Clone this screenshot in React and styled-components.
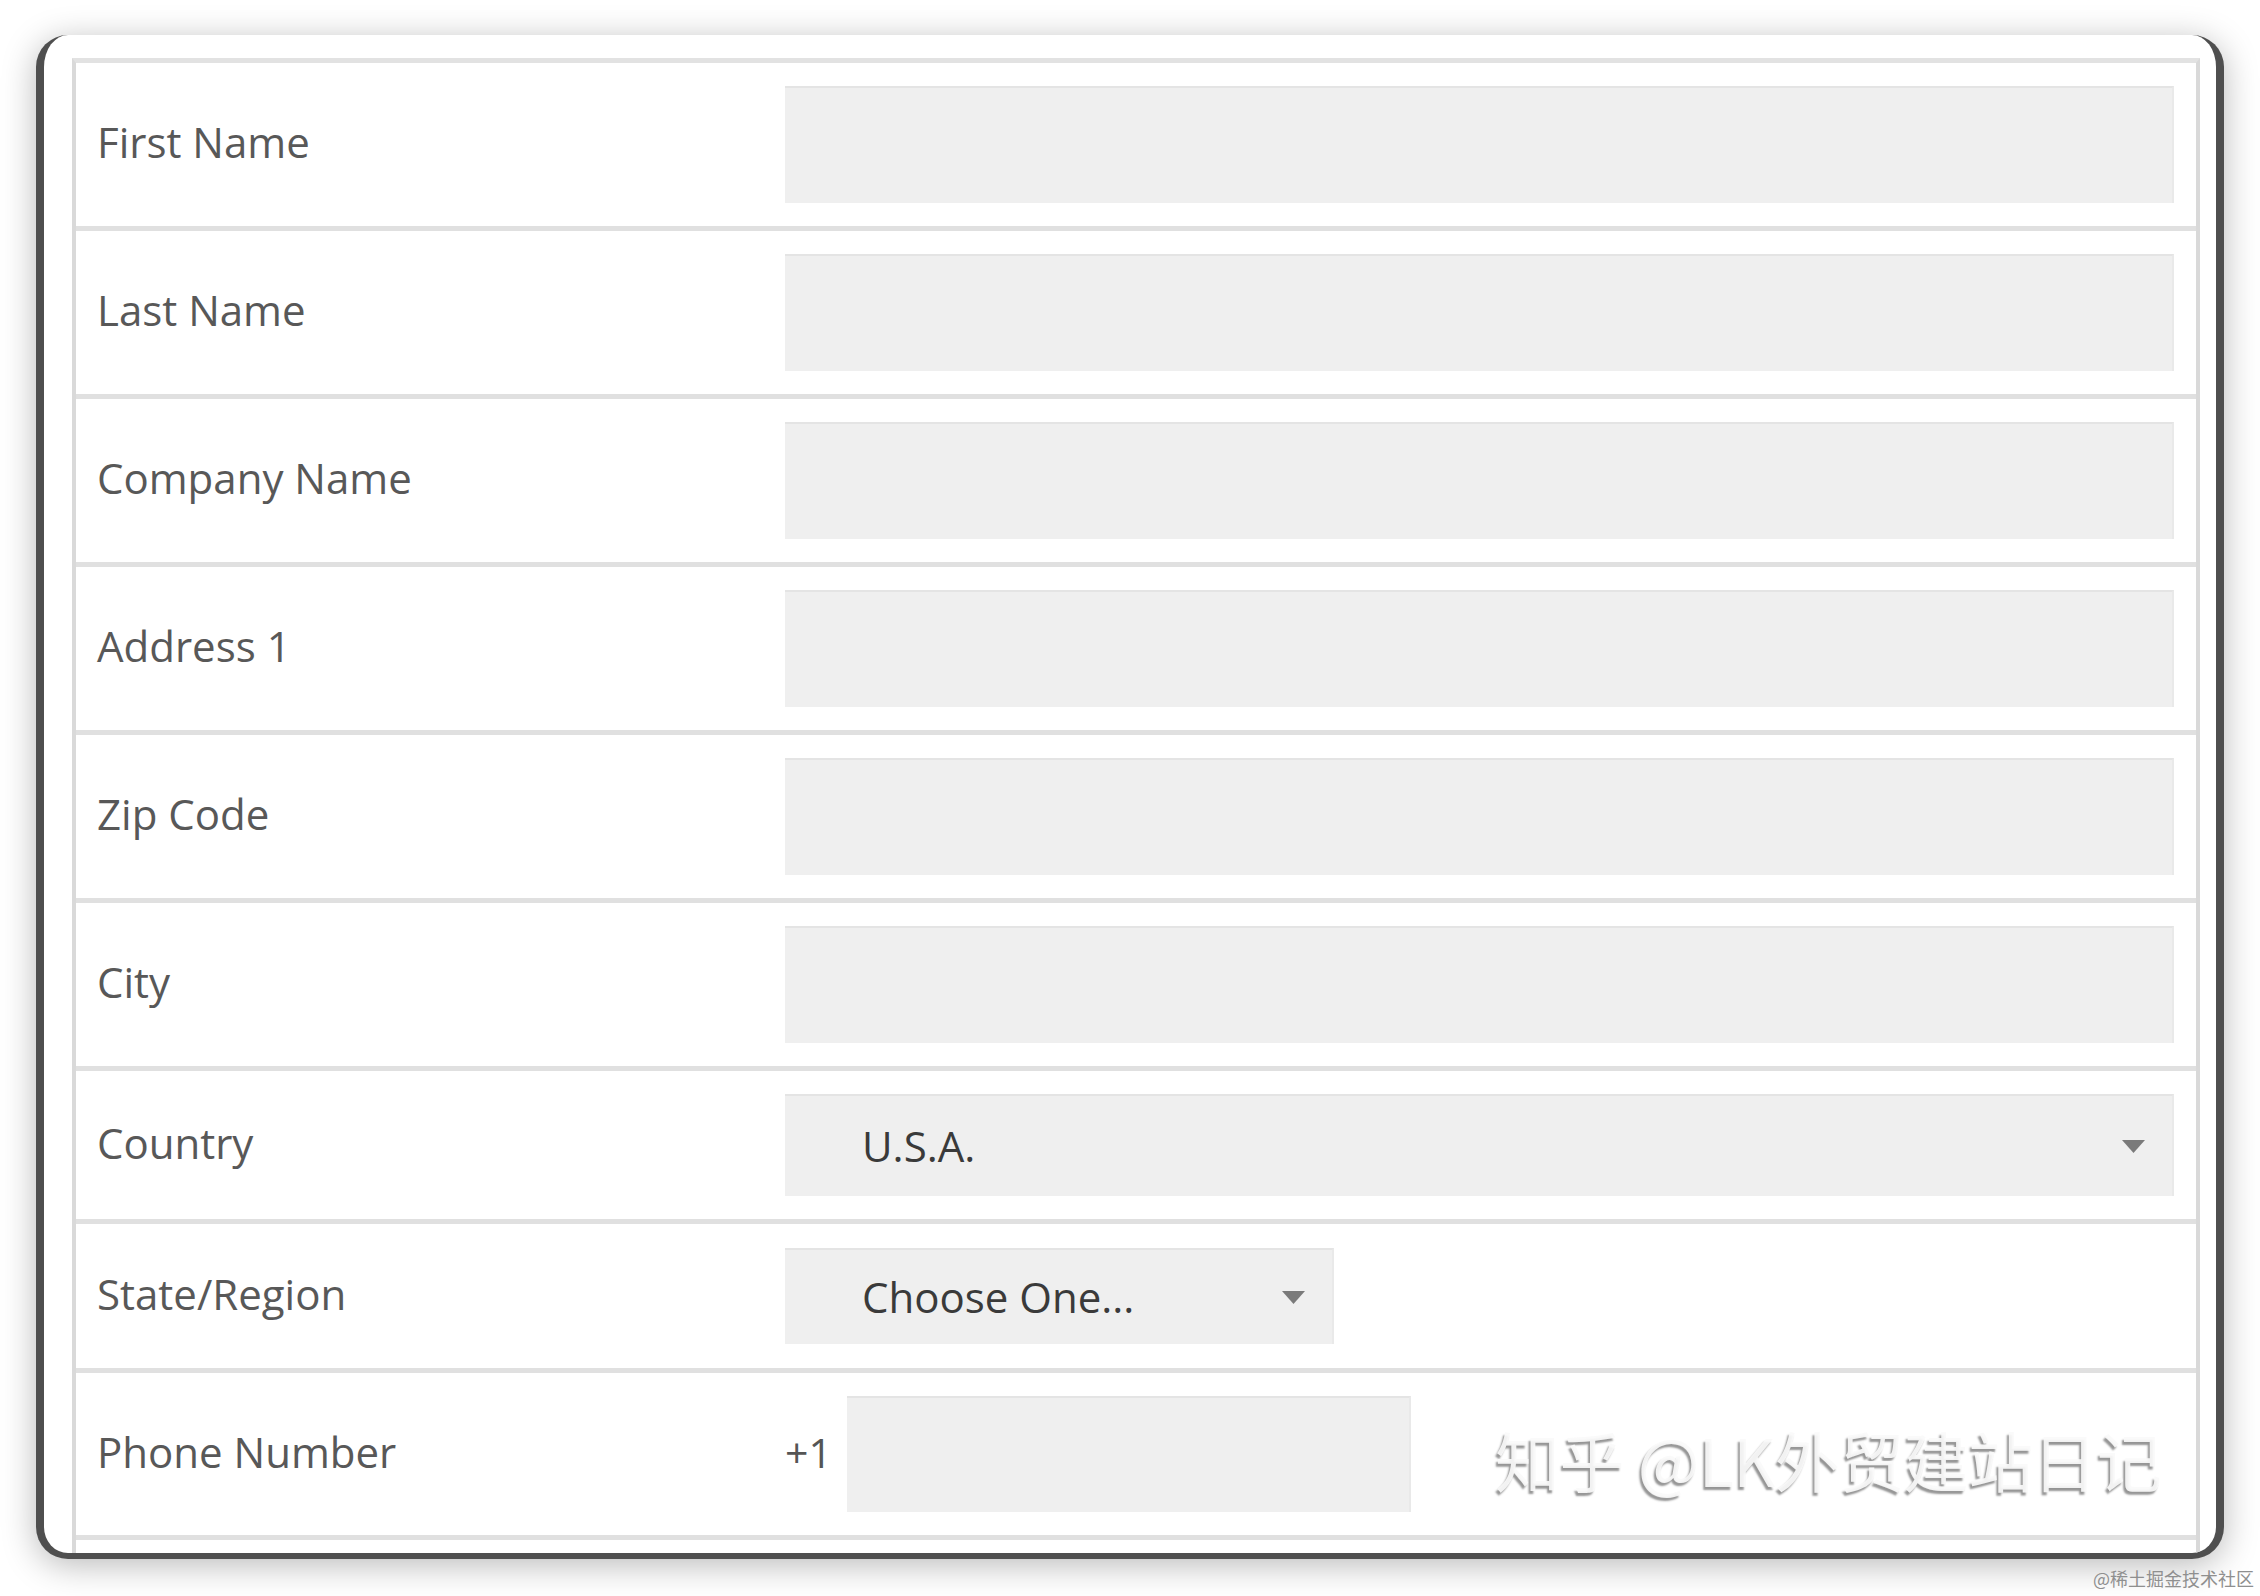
import React from 'react';
import styled, { createGlobalStyle } from 'styled-components';

const GlobalStyle = createGlobalStyle`
  html, body { margin: 0; padding: 0; background: #ffffff; }
  body { font-family: "Open Sans", "Noto Sans", "Liberation Sans", sans-serif; }
  * { box-sizing: border-box; }
`;

const Page = styled.div`
  position: relative;
  width: 2260px;
  height: 1596px;
  padding: 35px 36px 0 36px;
  background: #ffffff;
  overflow: hidden;
`;

const Card = styled.div`
  position: relative;
  height: 1524px;
  background: #ffffff;
  border-style: solid;
  border-color: #4f4f4f;
  border-width: 0 8px 6px 8px;
  border-radius: 32px;
  box-shadow: 0 6px 34px rgba(0, 0, 0, 0.28);
  padding: 23px 16px 0 28px;
  overflow: hidden;
`;

const Table = styled.div`
  display: flex;
  flex-direction: column;
  border-top: 5px solid #e2e2e2;
  border-left: 4px solid #d9d9d9;
  border-right: 4px solid #d9d9d9;
`;

const Row = styled.div`
  display: grid;
  grid-template-columns: 709px 1fr;
  align-items: center;
  padding: ${p => p.$pad}px 22px ${p => p.$pad}px 0;
  border-bottom: 5px solid #e0e0e0;
  min-height: ${p => p.$min || 0}px;
`;

const Label = styled.div`
  padding: 0 0 5px 21px;
  font-size: 42px;
  line-height: 1;
  color: #585858;
  white-space: nowrap;
`;

const TextInput = styled.input`
  display: block;
  width: ${p => p.$w || '100%'};
  height: ${p => p.$h || 117}px;
  margin: 0;
  padding: 0 24px;
  border: none;
  border-top: 2px solid #e4e4e4;
  border-right: 2px solid #e9e9e9;
  background: #efefef;
  outline: none;
  font-family: inherit;
  font-size: 42px;
  color: #3c3c3c;
`;

const Select = styled.div`
  display: flex;
  align-items: center;
  justify-content: space-between;
  width: ${p => p.$w || '100%'};
  height: ${p => p.$h}px;
  padding: 0 26px 0 77px;
  background: #efefef;
  border-top: 2px solid #e4e4e4;
  border-right: 2px solid #e9e9e9;
  font-size: 42px;
  line-height: 1;
  color: #3a3a3a;
`;

const Arrow = styled.svg`
  display: block;
  width: 25px;
  height: 15px;
  flex: none;
`;

const PhoneGroup = styled.div`
  display: flex;
  align-items: center;
  gap: 15px;
`;

const Prefix = styled.span`
  padding-bottom: 4px;
  font-size: 41px;
  line-height: 1;
  color: #555555;
`;

const Watermark = styled.div`
  position: absolute;
  left: 1451px;
  top: 1392px;
  font-family: "Noto Sans CJK SC", "Noto Sans", sans-serif;
  font-size: 65px;
  line-height: 1;
  letter-spacing: -0.6px;
  color: rgba(250, 250, 250, 0.92);
  text-shadow: -2px 3px 2px rgba(0, 0, 0, 0.42);
  white-space: nowrap;
  pointer-events: none;
`;

const Credit = styled.div`
  position: absolute;
  left: 2093px;
  top: 1569px;
  font-family: "Noto Sans CJK SC", "Noto Sans", sans-serif;
  font-size: 18px;
  line-height: 1;
  color: #8f8f8f;
  white-space: nowrap;
`;

const DropArrow = () => (
  <Arrow viewBox="0 0 25 15">
    <polygon points="1,1 24,1 12.5,14" fill="#7a7a7a" />
  </Arrow>
);

const textFields = ['First Name', 'Last Name', 'Company Name', 'Address 1', 'Zip Code', 'City'];

export default function App() {
  return (
    <>
      <GlobalStyle />
      <Page>
        <Card>
          <Table>
            {textFields.map(name => (
              <Row key={name} $pad={23}>
                <Label>{name}</Label>
                <TextInput aria-label={name} />
              </Row>
            ))}
            <Row $pad={23}>
              <Label>Country</Label>
              <Select $h={102}>
                <span>U.S.A.</span>
                <DropArrow />
              </Select>
            </Row>
            <Row $pad={24}>
              <Label>State/Region</Label>
              <Select $h={96} $w="549px">
                <span>Choose One...</span>
                <DropArrow />
              </Select>
            </Row>
            <Row $pad={23}>
              <Label>Phone Number</Label>
              <PhoneGroup>
                <Prefix>+1</Prefix>
                <TextInput aria-label="Phone Number" $w="564px" $h={116} />
              </PhoneGroup>
            </Row>
            <Row $pad={23} $min={160} />
          </Table>
          <Watermark>知乎 @LK外贸建站日记</Watermark>
        </Card>
        <Credit>@稀土掘金技术社区</Credit>
      </Page>
    </>
  );
}
